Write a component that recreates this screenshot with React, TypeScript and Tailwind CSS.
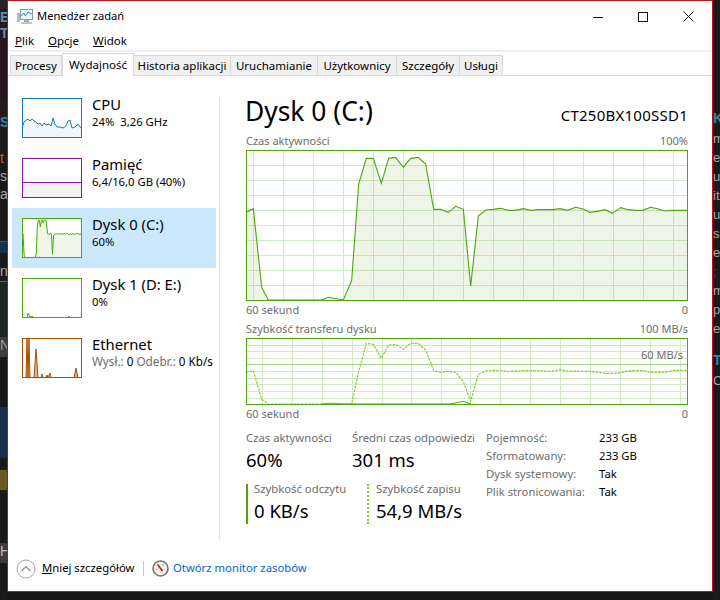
type Pt = [number, number]

// points read off the graph, in 3x crop coordinates
const busy: Pt[] = [
  [19, 247], [40, 236], [65, 472], [85, 510], [245, 510], [265, 502], [310, 510], [335, 452], [356, 162], [379, 85],
  [400, 85], [424, 160], [446, 85], [467, 82], [490, 112], [512, 85], [535, 82], [557, 102], [581, 238], [602, 238],
  [625, 247], [647, 229], [670, 238], [692, 468], [715, 258], [737, 240], [760, 238], [782, 235], [805, 241], [827, 241],
  [850, 236], [872, 241], [895, 239], [940, 239], [960, 236], [983, 241], [1007, 232], [1027, 236], [1050, 247], [1072, 244],
  [1095, 239], [1117, 250], [1142, 233], [1165, 239], [1187, 241], [1207, 241], [1232, 232], [1252, 236], [1275, 243],
  [1297, 241], [1342, 241],
]

const write: Pt[] = [
  [19, 172], [40, 167], [65, 253], [85, 267], [245, 267], [335, 266], [356, 170], [379, 85], [400, 88], [424, 130],
  [446, 90], [467, 88], [490, 103], [512, 85], [535, 85], [557, 105], [581, 167], [602, 172], [625, 169], [647, 172],
  [670, 200], [692, 258], [715, 178], [737, 168], [760, 166], [805, 169], [850, 167], [895, 167], [935, 169], [960, 164],
  [983, 168], [1050, 169], [1095, 175], [1130, 175], [1170, 167], [1210, 167], [1235, 172], [1275, 172], [1300, 166],
  [1342, 166],
]

const read: Pt[] = [[245, 267], [265, 265], [290, 265], [310, 267], [630, 267], [670, 259], [692, 267]]

const cpu: Pt[] = [
  [0, 30], [2, 24], [4, 22], [6, 21], [8, 23], [10, 21], [12, 23], [14, 24], [16, 26], [18, 25], [20, 28], [22, 25],
  [24, 27], [27, 26], [29, 28], [31, 20], [33, 26], [35, 29], [38, 29], [41, 30], [44, 28], [46, 23], [48, 22], [50, 30],
  [53, 29], [56, 26], [58, 29], [60, 30],
]

const disk1: Pt[] = [[0, 40], [5, 40], [6, 35], [8, 39], [10, 38], [12, 40], [46, 40], [47, 38], [48, 40], [60, 40]]

const net: Pt[] = [
  [0, 40], [4, 40], [5, 0], [6, 40], [7, 0], [8, 40], [12, 40], [14, 11], [16, 40], [19, 40], [20, 36], [21, 40], [24, 40],
  [25, 37], [26, 40], [28, 35], [29, 40], [52, 40], [54, 30], [56, 40], [60, 40],
]

function line(points: Pt[]) {
  return points.map(([x, y]) => `${x},${y}`).join(" ")
}

function crop(points: Pt[], oy: number) {
  return points.map(([x, y]): Pt => [240 + x / 3, oy + y / 3])
}

function Thumb({ color, fill, points, children }: { color: string; fill: string; points?: Pt[]; children?: React.ReactNode }) {
  return (
    <svg viewBox="0 0 60 40" width="60" height="40" className="mt-[10px] block shrink-0 bg-white">
      {points && <polygon points={line([[points[0][0], 40], ...points, [points[points.length - 1][0], 40]])} fill={fill} />}
      {points && <polyline points={line(points)} fill="none" stroke={color} strokeWidth="1" />}
      {children}
      <rect x="0.5" y="0.5" width="59" height="39" fill="none" stroke={color} />
    </svg>
  )
}

function SideItem({ title, selected, thumb, children }: { title: string; selected?: boolean; thumb: React.ReactNode; children: React.ReactNode }) {
  return (
    <div className={`ml-1 flex h-[60px] w-[204px] items-start gap-[10px] pl-[10px] ${selected ? "bg-[#cce8ff]" : ""}`}>
      {thumb}
      <div className="flex flex-col whitespace-nowrap pt-[6px] text-black">
        <div className="text-[14.8px] leading-[20px]">{title}</div>
        <div className="text-[11.3px] leading-[15px]">{children}</div>
      </div>
    </div>
  )
}

function Tab({ label, width, active }: { label: string; width: string; active?: boolean }) {
  return (
    <div
      className={
        active
          ? `-mb-px z-10 flex h-[23px] items-center justify-center border border-b-0 border-[#d9d9d9] bg-white text-[11.5px] text-black ${width}`
          : `flex h-[20px] items-center justify-center border border-b-0 border-l-0 border-[#d9d9d9] bg-[#f0f0f0] text-[11.5px] text-black first:border-l ${width}`
      }
    >
      {label}
    </div>
  )
}

function Stat({ label, value, className }: { label: string; value: string; className: string }) {
  return (
    <div className={className}>
      <div className="h-[14px] whitespace-nowrap text-[11.3px] leading-[14px] text-[#6d6d6d]">{label}</div>
      <div className="mt-[2px] whitespace-nowrap text-[18.5px] leading-[26px] text-black">{value}</div>
    </div>
  )
}

function LabelRow({ left, right, className }: { left: string; right: string; className: string }) {
  return (
    <div className={`flex justify-between text-[11px] leading-[14px] text-[#6d6d6d] ${className}`}>
      <span>{left}</span>
      <span>{right}</span>
    </div>
  )
}

function ActiveChart() {
  const pts = crop(busy, 130)
  const xs = [253, 283, 313, 343, 373, 403, 433, 463, 493, 523, 553, 583, 613, 643, 673]
  const ys = [165, 180, 195, 210, 225, 240, 255, 270, 285]
  return (
    <svg viewBox="246 150 442 151" width="442" height="151" className="block">
      {xs.map((x) => (
        <line key={x} x1={x + 0.5} x2={x + 0.5} y1="150" y2="300" stroke="#d3e8c6" />
      ))}
      {ys.map((y) => (
        <line key={y} x1="246" x2="688" y1={y + 0.5} y2={y + 0.5} stroke="#d3e8c6" />
      ))}
      <polygon points={line([[246.5, 300], ...pts, [687.5, 300]])} fill="#4da60c" fillOpacity="0.1" />
      <polyline points={line(pts)} fill="none" stroke="#4da60c" strokeWidth="1.1" />
      <rect x="246.5" y="150.5" width="441" height="150" fill="none" stroke="#4da60c" />
    </svg>
  )
}

function TransferChart() {
  const xs = [262, 292, 322, 352, 382, 411, 441, 470, 500, 530, 560, 590, 620, 650, 680]
  const ys = [345, 351, 358, 371, 378, 384, 391, 398]
  return (
    <svg viewBox="246 338 442 67" width="442" height="67" className="block">
      {xs.map((x) => (
        <line key={x} x1={x + 0.5} x2={x + 0.5} y1="338" y2="404" stroke="#d3e8c6" />
      ))}
      {ys.map((y) => (
        <line key={y} x1="246" x2="688" y1={y + 0.5} y2={y + 0.5} stroke="#d3e8c6" />
      ))}
      <line x1="246" x2="688" y1="364.5" y2="364.5" stroke="#a6d08c" />
      <polyline points={line(crop(read, 315))} fill="none" stroke="#4da60c" />
      <polyline points={line(crop(write, 315))} fill="none" stroke="#7fce2a" strokeWidth="1.2" strokeDasharray="2.5 1.2" />
      <rect x="246.5" y="338.5" width="441" height="66" fill="none" stroke="#4da60c" />
    </svg>
  )
}

function AppIcon() {
  return (
    <svg viewBox="0 0 17 17" width="17" height="17" className="shrink-0">
      <rect x="1" y="5" width="3" height="9" fill="#b8b8b8" />
      <rect x="4.5" y="1.5" width="12" height="10" fill="#eef6fb" stroke="#8c9aa4" />
      <polyline points="5,8 7.5,5 9.5,8 12,4 16,6" fill="none" stroke="#2b8fc9" />
      <rect x="8" y="12" width="5" height="2" fill="#a8a8a8" />
      <rect x="5" y="14" width="11" height="2" fill="#c4c4c4" />
    </svg>
  )
}

function LeftStrip() {
  return (
    <div className="flex w-[7px] shrink-0 flex-col overflow-hidden bg-[#1a1a1a] font-['Liberation_Sans',sans-serif] text-[14px] leading-[16px]">
      <div className="h-[9px] bg-[#2a2222]" />
      <div className="h-[16px] bg-[#2a1622] font-bold text-[#4f93a8]">E</div>
      <div className="h-[16px] bg-[#2a1622] font-bold text-[#4f93a8]">T</div>
      <div className="h-[59px] bg-[#27141f]" />
      <div className="h-[14px] bg-[#231a20]" />
      <div className="h-[16px] bg-[#231a20] font-bold text-[#2f87a8]">S</div>
      <div className="h-[20px] bg-[#1d1a1b]" />
      <div className="h-[18px] text-[#c9572e]">t</div>
      <div className="h-[18px] text-[#a8a8a8]">st</div>
      <div className="h-[18px] text-[#a8a8a8]">a</div>
      <div className="h-[37px]" />
      <div className="h-px bg-[#555555]" />
      <div className="h-[11px] bg-[#12304f]" />
      <div className="h-[10px]" />
      <div className="h-[18px] text-[#a8a8a8]">nt</div>
      <div className="h-px bg-[#666666]" />
      <div className="h-[55px] bg-[#1e2622]" />
      <div className="h-[20px] bg-[#3c3c3c] text-[#9a9a9a]">N</div>
      <div className="h-[50px] bg-[#181818]" />
      <div className="h-[51px] bg-[#16304c]" />
      <div className="h-[12px]" />
      <div className="h-[20px] bg-[#6b5a24]" />
      <div className="h-[53px]" />
      <div className="h-[20px] bg-[#3c3c3c] text-[#bbbbbb]">H</div>
    </div>
  )
}

function RightStrip() {
  return (
    <div className="flex h-[600px] w-[7px] shrink-0 flex-col overflow-hidden bg-[#1a1a1a] pt-[109px] font-['Liberation_Sans',sans-serif] text-[13px] leading-[19px] text-[#a8a8a8]">
      <div className="h-[18px] text-[14px] font-bold leading-[18px] text-[#2f87a8]">K</div>
      <div className="mt-[2px]">m</div>
      <div>e</div>
      <div>u</div>
      <div>it</div>
      <div>u</div>
      <div>s</div>
      <div>e</div>
      <div className="text-[#7a2a22]">;</div>
      <div>m</div>
      <div>p</div>
      <div>e</div>
      <div className="mt-[13px] h-[18px] text-[14px] font-bold leading-[18px] text-[#2f87a8]">T</div>
      <div className="mt-[2px]">C</div>
    </div>
  )
}

export default function App() {
  return (
    <div className="flex h-[600px] w-[720px] overflow-hidden bg-[#171717] font-['Noto_Sans',sans-serif] antialiased">
      <LeftStrip />
      <div className="flex h-[592px] w-[706px] shrink-0 flex-col border border-[#b5121b] bg-white">
        {/* title bar */}
        <div className="flex h-[31px] items-center pl-2">
          <AppIcon />
          <span className="ml-[4px] text-[11.2px] text-black">Menedżer zadań</span>
          <div className="ml-auto mr-[18px] flex items-center gap-[35px]">
            <svg width="10" height="10" viewBox="0 0 10 10">
              <line x1="0" x2="10" y1="5.5" y2="5.5" stroke="#111" />
            </svg>
            <svg width="10" height="10" viewBox="0 0 10 10">
              <rect x="0.5" y="0.5" width="9" height="9" fill="none" stroke="#111" />
            </svg>
            <svg width="11" height="11" viewBox="0 0 11 11">
              <path d="M0.5 0.5 L10.5 10.5 M10.5 0.5 L0.5 10.5" stroke="#111" fill="none" />
            </svg>
          </div>
        </div>

        {/* menu */}
        <div className="flex h-[18px] items-center gap-[14px] pl-[7px] text-[11.5px] text-black">
          <span>
            <u>P</u>lik
          </span>
          <span>
            <u>O</u>pcje
          </span>
          <span>
            <u>W</u>idok
          </span>
        </div>
        <div className="h-[2px] bg-[#f0f0f0]" />

        {/* tabs */}
        <div className="flex h-[24px] items-end border-b border-[#d9d9d9] pl-[2px]">
          <Tab label="Procesy" width="w-[52px]" />
          <Tab label="Wydajność" width="w-[72px]" active />
          <Tab label="Historia aplikacji" width="w-[97px]" />
          <Tab label="Uruchamianie" width="w-[87px]" />
          <Tab label="Użytkownicy" width="w-[79px]" />
          <Tab label="Szczegóły" width="w-[63px]" />
          <Tab label="Usługi" width="w-[43px]" />
        </div>

        <div className="flex flex-1">
          {/* left list */}
          <div className="flex w-[211px] shrink-0 flex-col pt-3">
            <SideItem title="CPU" thumb={<Thumb color="#117dbb" fill="#f1f6fa" points={cpu} />}>
              24%&nbsp; 3,26 GHz
            </SideItem>
            <SideItem
              title="Pamięć"
              thumb={
                <Thumb color="#8b12ae" fill="#f4f2f4">
                  <rect x="0" y="24" width="60" height="16" fill="#f4f2f4" />
                  <line x1="0" x2="60" y1="24.5" y2="24.5" stroke="#8b12ae" />
                </Thumb>
              }
            >
              6,4/16,0 GB (40%)
            </SideItem>
            <SideItem
              title="Dysk 0 (C:)"
              selected
              thumb={
                <Thumb
                  color="#4da60c"
                  fill="#eff7e8"
                  points={crop(busy, 130).map(([x, y]): Pt => [((x - 246) * 60) / 442, ((y - 150) * 40) / 150])}
                />
              }
            >
              60%
            </SideItem>
            <SideItem title="Dysk 1 (D: E:)" thumb={<Thumb color="#4da60c" fill="#dcedcf" points={disk1} />}>
              0%
            </SideItem>
            <SideItem title="Ethernet" thumb={<Thumb color="#a74f01" fill="#e8b48c" points={net} />}>
              <span className="text-[11.7px]">
                <span className="text-[#6d6d6d]">Wysł.:</span> 0 <span className="text-[#6d6d6d]">Odebr.:</span> 0 Kb/s
              </span>
            </SideItem>
          </div>

          <div className="mt-[22px] h-[442px] w-px shrink-0 bg-[#e0e0e0]" />

          {/* main panel */}
          <div className="ml-[26px] flex w-[442px] flex-col">
            <div className="flex h-[58px] items-start justify-between">
              <span className="-ml-px mt-[17px] text-[26.4px] leading-[36px] text-black">Dysk 0 (C:)</span>
              <span className="mt-[28px] text-[15px] leading-[22px] tracking-[0.25px] text-black">CT250BX100SSD1</span>
            </div>
            <LabelRow left="Czas aktywności" right="100%" className="h-[16px]" />
            <ActiveChart />
            <LabelRow left="60 sekund" right="0" className="mt-[2px] h-[17px]" />
            <LabelRow left="Szybkość transferu dysku" right="100 MB/s" className="h-[18px] pt-[2px]" />
            <div className="relative">
              <TransferChart />
              <span className="absolute right-[5px] top-[10px] text-[11px] leading-[14px] text-[#6d6d6d]">60 MB/s</span>
            </div>
            <LabelRow left="60 sekund" right="0" className="mt-[2px] h-[18px]" />

            <div className="mt-[6px] flex">
              <div className="flex w-[240px] shrink-0 flex-col">
                <div className="flex">
                  <Stat label="Czas aktywności" value="60%" className="w-[106px]" />
                  <Stat label="Średni czas odpowiedzi" value="301 ms" className="w-[134px]" />
                </div>
                <div className="mt-[11px] flex">
                  <div className="flex h-[40px] w-[121px] border-l-[2px] border-[#4da60c] pl-[6px]">
                    <Stat label="Szybkość odczytu" value="0 KB/s" className="mt-[-2px]" />
                  </div>
                  <div className="flex h-[40px] border-l-[2px] border-dotted border-[#7fce2a] pl-[7px]">
                    <Stat label="Szybkość zapisu" value="54,9 MB/s" className="mt-[-2px]" />
                  </div>
                </div>
              </div>
              <div className="-mt-[2px] grid auto-rows-[18px] grid-cols-[113px_auto] text-[11.3px] leading-[18px]">
                <span className="text-[#6d6d6d]">Pojemność:</span>
                <span className="text-black">233 GB</span>
                <span className="text-[#6d6d6d]">Sformatowany:</span>
                <span className="text-black">233 GB</span>
                <span className="text-[#6d6d6d]">Dysk systemowy:</span>
                <span className="text-black">Tak</span>
                <span className="text-[#6d6d6d]">Plik stronicowania:</span>
                <span className="text-black">Tak</span>
              </div>
            </div>
          </div>
        </div>

        {/* footer */}
        <div className="flex h-[36px] items-center pb-[9px] pl-[8px] text-[11.3px]">
          <svg width="20" height="20" viewBox="0 0 20 20" className="shrink-0">
            <circle cx="10" cy="10" r="9" fill="none" stroke="#a8a8a8" />
            <path d="M5.5 12 L10 7.5 L14.5 12" fill="none" stroke="#8a8a8a" strokeWidth="1.2" />
          </svg>
          <span className="ml-[6px] w-[101px] whitespace-nowrap text-black">
            <u>M</u>niej szczegółów
          </span>
          <div className="h-[15px] w-px bg-[#c8c8c8]" />
          <svg width="17" height="17" viewBox="0 0 17 17" className="ml-2 shrink-0">
            <circle cx="8.5" cy="8.5" r="7.5" fill="#f2f0ec" stroke="#77736c" strokeWidth="1.6" />
            <path d="M5.5 4.5 L10.5 11" stroke="#c8161d" strokeWidth="1.6" />
            <path d="M10 4 L12 6 M4 9 L5 10" stroke="#9a9a9a" />
          </svg>
          <span className="ml-[4px] whitespace-nowrap text-[#0066cc]">Otwórz monitor zasobów</span>
        </div>
      </div>
      <RightStrip />
    </div>
  )
}
